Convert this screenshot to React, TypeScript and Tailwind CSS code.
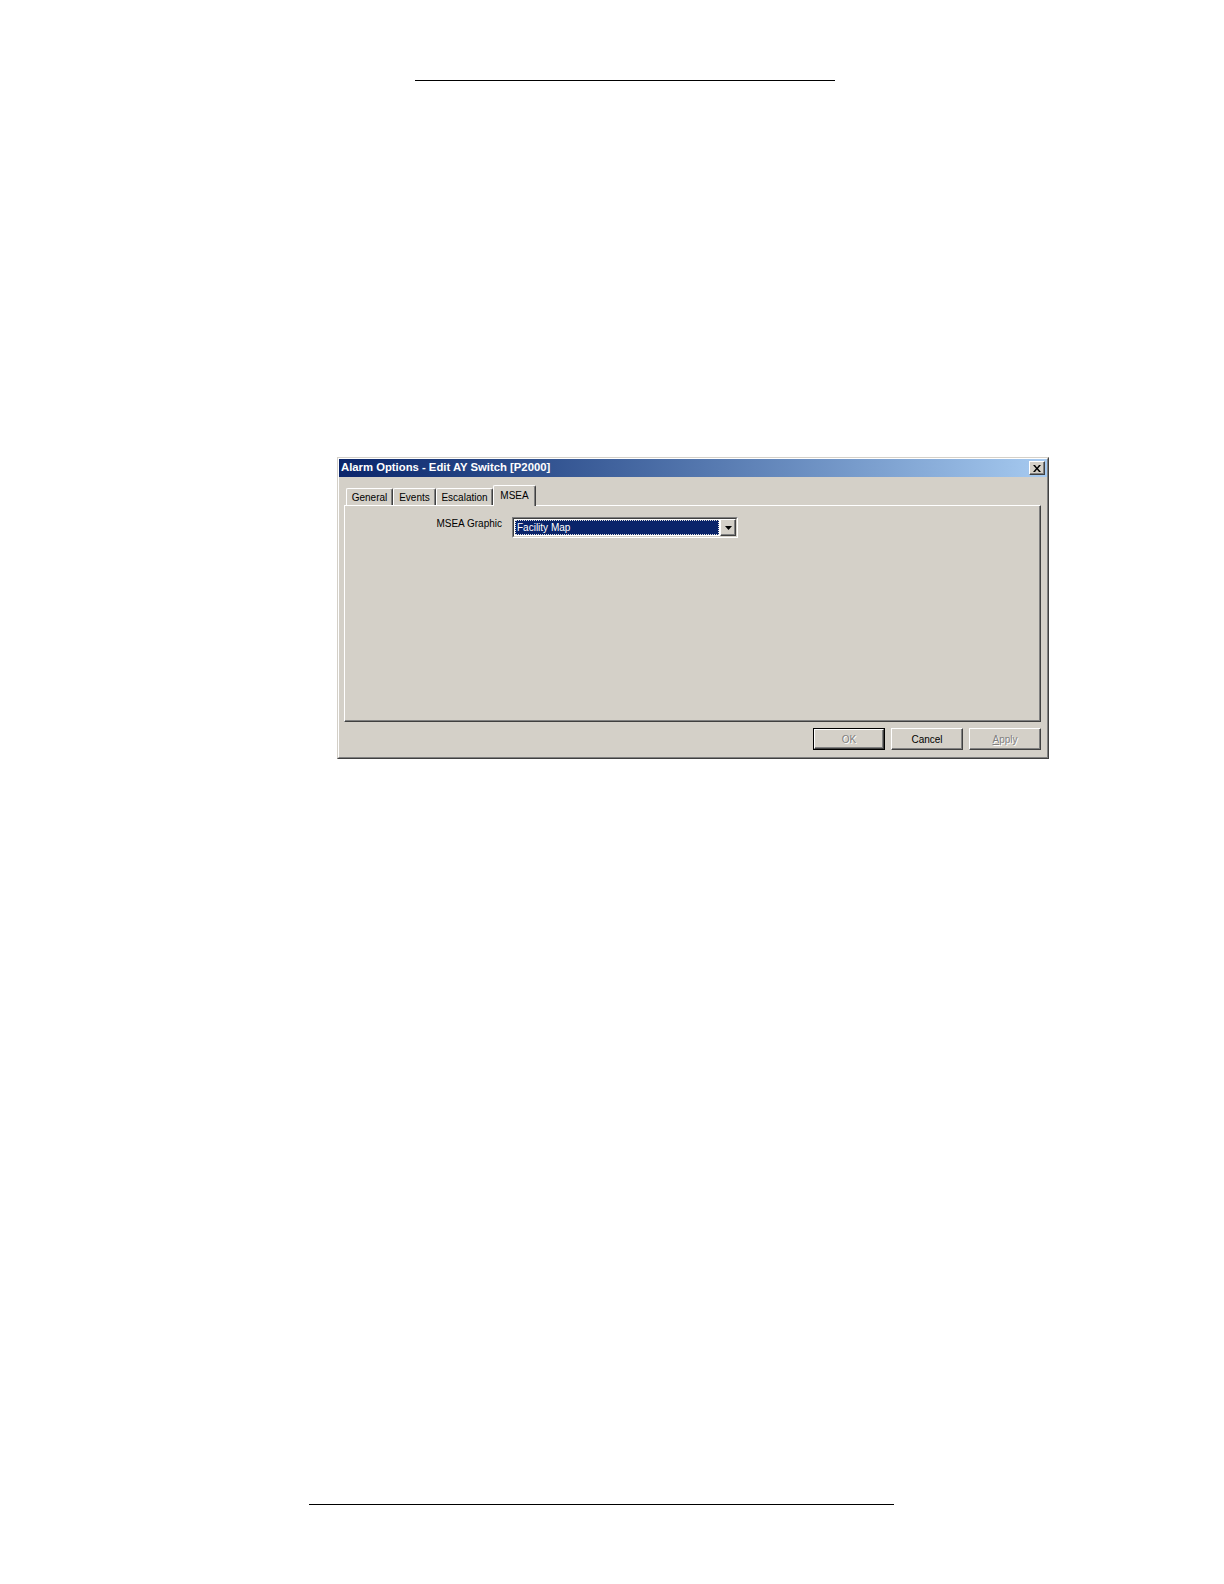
const raised =
  "border border-t-white border-l-white border-r-[#404040] border-b-[#404040] shadow-[inset_-1px_-1px_0_#808080]"

function Tab({ label, w, active }: { label: string; w: string; active?: boolean }) {
  if (active) {
    return (
      <div
        className={`${w} h-[21px] bg-[#d4d0c8] border-t border-l border-r border-t-white border-l-white border-r-[#404040] rounded-t-[2px] shadow-[inset_-1px_0_0_#808080] flex justify-center pt-[2px]`}
      >
        {label}
      </div>
    )
  }
  return (
    <div
      className={`${w} h-[17px] mb-px border-t border-l border-r border-t-white border-l-white border-r-[#404040] rounded-t-[2px] shadow-[inset_-1px_0_0_#808080] flex items-center justify-center`}
    >
      {label}
    </div>
  )
}

function Button({ children, isDefault, disabled }: { children: React.ReactNode; isDefault?: boolean; disabled?: boolean }) {
  const text = disabled ? "text-[#808080] [text-shadow:1px_1px_0_#ffffff]" : "text-black"
  if (isDefault) {
    return (
      <div className="w-[72px] h-[22px] border border-black">
        <div className={`h-full ${raised} flex items-center justify-center ${text}`}>{children}</div>
      </div>
    )
  }
  return <div className={`w-[72px] h-[22px] ${raised} flex items-center justify-center ${text}`}>{children}</div>
}

function AlarmDialog() {
  return (
    <div className="ml-[337px] mt-[376px] w-[712px] h-[302px] bg-[#d4d0c8] border border-t-[#d4d0c8] border-l-[#d4d0c8] border-r-[#404040] border-b-[#404040] font-['Liberation_Sans',Arial,sans-serif] text-[10px] text-black">
      <div className="h-full flex flex-col border border-t-white border-l-white border-r-[#808080] border-b-[#808080]">
        {/* title bar */}
        <div className="h-[18px] flex items-center justify-between pl-[2px] pr-[2px] bg-linear-to-r from-[#0a246a] to-[#a6caf0]">
          <span className="text-white font-bold text-[11.3px] leading-none">Alarm Options - Edit AY Switch [P2000]</span>
          <div className={`w-[16px] h-[14px] bg-[#d4d0c8] ${raised} flex items-center justify-center`}>
            <svg width="8" height="7" viewBox="0 0 8 7">
              <path d="M0 0h2l2 2.5L6 0h2L5 3.5 8 7H6L4 4.5 2 7H0l3-3.5z" fill="#000" />
            </svg>
          </div>
        </div>

        <div className="flex flex-col pl-[5px] pr-[6px]">
          {/* tabs */}
          <div className="relative z-10 mt-[8px] -mb-px h-[21px] flex items-end pl-[2px]">
            <Tab label="General" w="w-[47px]" />
            <Tab label="Events" w="w-[43px]" />
            <Tab label="Escalation" w="w-[57px]" />
            <Tab label="MSEA" w="w-[43px]" active />
          </div>

          {/* panel */}
          <div className="h-[217px] border border-t-white border-l-white border-r-[#404040] border-b-[#404040] shadow-[inset_-1px_-1px_0_#808080] pt-[11px] flex items-start">
            <div className="w-[157px] mt-px text-right leading-[12px]">MSEA Graphic</div>
            <div className="ml-[10px] w-[226px] h-[21px] border border-t-[#808080] border-l-[#808080] border-r-white border-b-white">
              <div className="h-full flex border border-t-[#404040] border-l-[#404040] border-r-[#d4d0c8] border-b-[#d4d0c8] bg-white">
                <div className="flex-1 m-px bg-[#0a246a] border border-dotted border-[#e0e0e0] text-white flex items-center pl-px leading-none">
                  Facility Map
                </div>
                <div className={`w-[16px] h-full bg-[#d4d0c8] ${raised} flex items-center justify-center`}>
                  <svg width="7" height="4" viewBox="0 0 7 4">
                    <path d="M0 0h7L3.5 4z" fill="#000" />
                  </svg>
                </div>
              </div>
            </div>
          </div>

          {/* buttons */}
          <div className="mt-[6px] flex justify-end gap-[6px]">
            <Button isDefault disabled>
              OK
            </Button>
            <Button>Cancel</Button>
            <Button disabled>
              <span className="underline underline-offset-1">A</span>pply
            </Button>
          </div>
        </div>
      </div>
    </div>
  )
}

export default function App() {
  return (
    <div className="min-h-[1584px] w-[1224px] bg-white flex flex-col">
      <div className="mt-[80px] ml-[415px] w-[420px] h-px bg-black" />
      <AlarmDialog />
      <div className="mt-[745px] ml-[309px] w-[585px] h-px bg-black" />
    </div>
  )
}
